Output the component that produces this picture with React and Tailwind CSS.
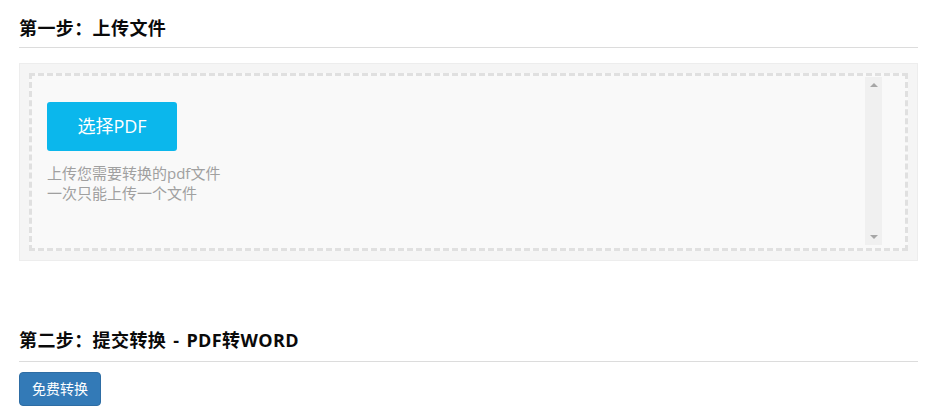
const Step = ({ children, className }) => (
  <div className={`border-b border-[#dcdcdc] ${className}`}>
    <h2 className="text-[18px] leading-[26px] font-bold tracking-[0.4px] text-[#0a0a0a]">{children}</h2>
  </div>
);

const FakeScrollbar = () => (
  <div className="w-[17px] mt-[1px] mb-[3px] mr-[23px] bg-[#f0f0f0] flex flex-col items-center justify-between py-[6px]">
    <div className="w-0 h-0 border-l-[4px] border-r-[4px] border-b-[4px] border-l-transparent border-r-transparent border-b-[#a6a6a6]" />
    <div className="w-0 h-0 border-l-[4px] border-r-[4px] border-t-[4px] border-l-transparent border-r-transparent border-t-[#a6a6a6]" />
  </div>
);

export default function App() {
  return (
    <div className="min-h-screen bg-white font-['Open_Sans','Noto_Sans_CJK_SC',sans-serif]">
      <div className="w-[899px] ml-[19px]">
        <Step className="pt-[15px] pb-[6px]">第一步：上传文件</Step>

        <div className="mt-[15px] h-[198px] bg-[#f5f5f5] border border-[#ededed] p-[9px]">
          <div className="h-full bg-[#f9f9f9] border-[3px] border-dashed border-[#e0e0e0] flex">
            <div className="flex-1 pl-[15px] pt-[26px]">
              <button className="w-[130px] h-[49px] rounded-[3px] bg-[#0bb7ec] text-white text-[18px] leading-[49px]">
                选择PDF
              </button>
              <div className="mt-[12px] text-[15px] leading-[20px] text-[#a0a0a0]">
                <p>上传您需要转换的pdf文件</p>
                <p>一次只能上传一个文件</p>
              </div>
            </div>
            <FakeScrollbar />
          </div>
        </div>

        <Step className="mt-[66px] pb-[8px]">
          第二步：提交转换<span className="mx-[7px]">-</span>PDF转WORD
        </Step>

        <button className="mt-[10px] h-[34px] px-[12px] rounded-[4px] bg-[#337ab7] border border-[#2e6da4] text-white text-[14px] leading-[20px]">
          免费转换
        </button>
      </div>
    </div>
  );
}
